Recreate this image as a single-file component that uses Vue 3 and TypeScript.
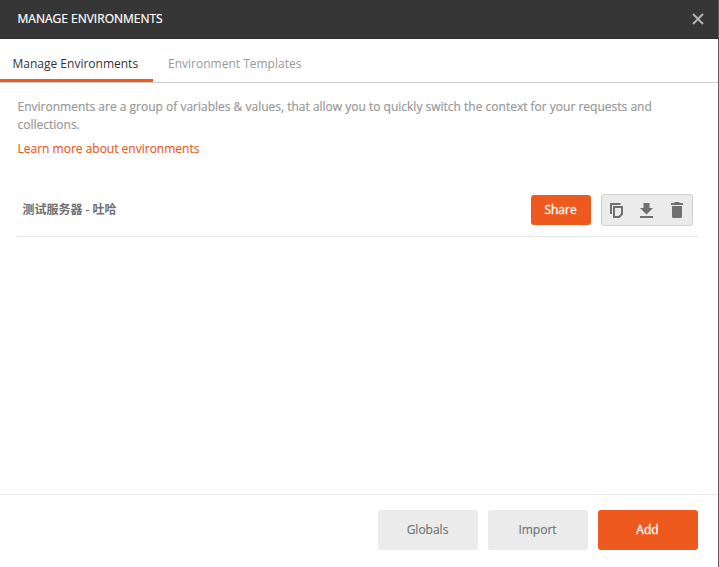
<script setup lang="ts">
import { ref } from 'vue'

const tabs: string[] = ['Manage Environments', 'Environment Templates']
const activeTab = ref<number>(0)
const environments: string[] = ['测试服务器 - 吐哈']
</script>

<template>
  <div class="modal">
    <header class="header">
      <h1>MANAGE ENVIRONMENTS</h1>
      <button class="close" aria-label="Close">
        <svg width="12" height="12" viewBox="0 0 12 12"><path d="M1 1L11 11M11 1L1 11" /></svg>
      </button>
    </header>
    <nav class="tabs">
      <button
        v-for="(tab, i) in tabs"
        :key="tab"
        class="tab"
        :class="{ active: i === activeTab }"
        @click="activeTab = i"
      >
        <span>{{ tab }}</span>
      </button>
    </nav>
    <main class="content">
      <p class="description">
        Environments are a group of variables &amp; values, that allow you to quickly switch the context for your requests and collections.
      </p>
      <a class="learn">Learn more about environments</a>
      <ul class="list">
        <li v-for="env in environments" :key="env" class="row">
          <span class="name">{{ env }}</span>
          <button class="share">Share</button>
          <div class="actions">
            <button aria-label="Duplicate">
              <svg width="14" height="16" viewBox="0 0 14 16">
                <path class="line" d="M1 12V2H10.5" />
                <path class="line" d="M4 5H12V12L9.2 15H4Z" />
              </svg>
            </button>
            <button aria-label="Download">
              <svg width="14" height="16" viewBox="0 0 14 16">
                <path d="M3.5 1H9.5V6H13L6.5 12.5L0 6H3.5ZM0 14H13V16H0Z" />
              </svg>
            </button>
            <button aria-label="Delete">
              <svg width="14" height="16" viewBox="0 0 14 16">
                <path d="M1 1H4L5 0H9L10 1H13V3H1ZM2 4H12V14.5Q12 16 10.5 16H3.5Q2 16 2 14.5Z" />
              </svg>
            </button>
          </div>
        </li>
      </ul>
    </main>
    <footer class="footer">
      <button>Globals</button>
      <button>Import</button>
      <button class="primary">Add</button>
    </footer>
  </div>
</template>

<style>
body {
  margin: 0;
}
</style>

<style scoped>
.modal {
  box-sizing: border-box;
  height: 567px;
  display: flex;
  flex-direction: column;
  border-right: 1px solid #5b5b5b;
  background: #fff;
  font-family: 'Open Sans', 'Noto Sans CJK SC', sans-serif;
  font-size: 12px;
  line-height: 18px;
  color: #808080;
}
button {
  margin: 0;
  padding: 0;
  border: 0;
  background: none;
  font: inherit;
  color: inherit;
}
svg {
  display: block;
}
.header {
  box-sizing: border-box;
  height: 39px;
  flex: none;
  display: flex;
  align-items: center;
  justify-content: space-between;
  padding: 0 14px 0 17.5px;
  background: #363636;
  border-bottom: 1px solid #2e2e2e;
}
.header h1 {
  margin: 0;
  font-size: 12px;
  font-weight: 400;
  color: #fff;
  -webkit-text-stroke: 0.2px;
}
.close path {
  fill: none;
  stroke: #b3b3b3;
  stroke-width: 2;
}
.tabs {
  box-sizing: border-box;
  height: 44px;
  flex: none;
  display: flex;
  border-bottom: 1px solid #cfcfcf;
}
.tab {
  box-sizing: border-box;
  padding: 9px 15px 0;
  border-bottom: 3px solid transparent;
  color: #999;
}
.tab:first-child {
  width: 153px;
  padding: 9px 14px 0 12.5px;
  text-align: left;
}
.tab.active {
  border-bottom-color: #f15a1e;
  color: #333;
}
.tab span {
  white-space: nowrap;
}
.content {
  flex: 1;
  padding: 15px 20px 0 17px;
}
.description {
  margin: 0 0 6px 0.5px;
  color: #999;
  -webkit-text-stroke: 0.2px;
}
.learn {
  display: block;
  margin-left: 0.5px;
  color: #ee5a1d;
  -webkit-text-stroke: 0.15px;
}
.list {
  margin: 25px 0 0;
  padding: 0;
  list-style: none;
}
.row {
  box-sizing: border-box;
  height: 54px;
  display: flex;
  align-items: center;
  padding: 0 5px;
  border-bottom: 1px solid #e6e6e6;
}
.name {
  flex: 1;
  padding-left: 0.5px;
  font-weight: 600;
  color: #707070;
}
.share {
  width: 60px;
  height: 30px;
  margin-right: 10px;
  padding-right: 1px;
  border-radius: 3px;
  background: #ee5a1d;
  color: #fff;
  -webkit-text-stroke: 0.3px;
}
.actions {
  box-sizing: border-box;
  width: 92px;
  height: 32px;
  display: flex;
  border: 1px solid #d0d0d0;
  border-radius: 3px;
  background: #ebebeb;
}
.actions button {
  flex: 1;
  display: flex;
  align-items: center;
  justify-content: center;
}
.actions path {
  fill: #707070;
}
.actions .line {
  fill: none;
  stroke: #707070;
  stroke-width: 2;
}
.footer {
  box-sizing: border-box;
  height: 73px;
  flex: none;
  display: flex;
  justify-content: flex-end;
  gap: 10px;
  padding: 15px 20px 0 0;
  border-top: 1px solid #e6e6e6;
}
.footer button {
  width: 100px;
  height: 40px;
  padding-right: 1px;
  border-radius: 3px;
  background: #ebebeb;
  color: #737373;
  -webkit-text-stroke: 0.15px;
}
.footer .primary {
  background: #ee5a1d;
  color: #fff;
  -webkit-text-stroke: 0.3px;
}
</style>
